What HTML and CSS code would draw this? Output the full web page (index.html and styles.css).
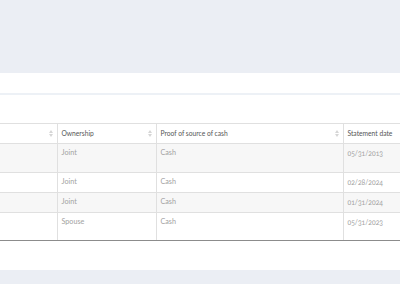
FILE: index.html
```html
<!DOCTYPE html>
<html>
<head>
<meta charset="utf-8">
<link rel="stylesheet" href="styles.css">
</head>
<body>
<div class="page">
  <div class="top-band"></div>
  <div class="panel">
    <div class="panel-head"></div>
    <div class="panel-body">
      <table class="grid">
        <colgroup>
          <col class="c1"><col class="c2"><col class="c3"><col class="c4">
        </colgroup>
        <thead>
          <tr>
            <th><span class="sort"></span></th>
            <th>Ownership<span class="sort"></span></th>
            <th>Proof of source of cash<span class="sort"></span></th>
            <th>Statement date</th>
          </tr>
        </thead>
        <tbody>
          <tr class="odd tall"><td></td><td>Joint</td><td>Cash</td><td class="date">05/31/2013</td></tr>
          <tr><td></td><td>Joint</td><td>Cash</td><td class="date">02/28/2024</td></tr>
          <tr class="odd"><td></td><td>Joint</td><td>Cash</td><td class="date">01/31/2024</td></tr>
          <tr class="tall2"><td></td><td>Spouse</td><td>Cash</td><td class="date">05/31/2023</td></tr>
        </tbody>
      </table>
    </div>
  </div>
</div>
</body>
</html>
```
FILE: styles.css
```css
html, body {
  margin: 0;
  padding: 0;
  background: #ebeef4;
  font-family: "Lato", "Liberation Sans", sans-serif;
}
.page {
  width: 400px;
  height: 284px;
  overflow: hidden;
}
.top-band {
  height: 73px;
}
.panel {
  background: #ffffff;
  height: 197px;
  overflow: hidden;
}
.panel-head {
  height: 20px;
  border-bottom: 2px solid #edf1f6;
}
.panel-body {
  padding-top: 28px;
}
.grid {
  border-collapse: collapse;
  table-layout: fixed;
  width: 479px;
  border-bottom: 1px solid #8c8c8c;
}
.c1 { width: 57px; }
.c2 { width: 99px; }
.c3 { width: 187px; }
.c4 { width: 136px; }
.grid th, .grid td {
  border: 1px solid #e0e0e0;
  border-top: none;
  border-left: none;
  padding: 4px 5px 5px 4px;
  line-height: 10px;
  height: 10px;
  text-align: left;
  vertical-align: top;
  white-space: nowrap;
}
.grid thead th {
  border-top: 1px solid #e0e0e0;
  font-weight: 400;
  font-size: 6.7px;
  color: #555555;
  position: relative;
}
.grid td {
  font-size: 7.2px;
  font-weight: 400;
  color: #a2a2a2;
}
.grid td.date {
  font-size: 6.8px;
  font-variant-numeric: oldstyle-nums;
}
.grid tr.odd td {
  background: #f7f7f7;
}
.grid tr.tall td { height: 19px; }
.grid tr.tall2 td { height: 18px; }
.grid tbody tr:last-child td { border-bottom: 1px solid #8c8c8c; }
.sort {
  position: absolute;
  right: 4px;
  top: 6px;
  width: 4px;
  height: 7px;
}
.sort::before, .sort::after {
  content: "";
  position: absolute;
  left: 0;
  border-left: 2px solid transparent;
  border-right: 2px solid transparent;
}
.sort::before {
  top: 0;
  border-bottom: 3px solid #d6d6d6;
}
.sort::after {
  bottom: 0;
  border-top: 3px solid #d6d6d6;
}
```
